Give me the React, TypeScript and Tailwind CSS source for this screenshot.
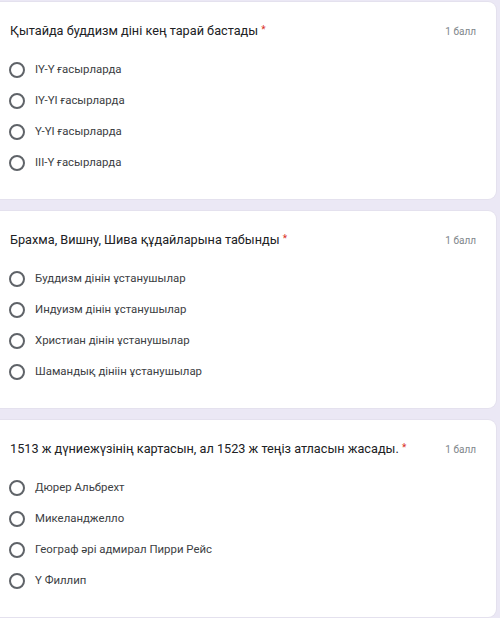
import React from "react";

type Question = {
	title: string;
	options: string[];
};

const questions: Question[] = [
	{
		title: "Қытайда буддизм діні кең тарай бастады",
		options: ["IY-Y ғасырларда", "IY-YI ғасырларда", "Y-YI ғасырларда", "III-Y ғасырларда"],
	},
	{
		title: "Брахма, Вишну, Шива құдайларына табынды",
		options: [
			"Буддизм дінін ұстанушылар",
			"Индуизм дінін ұстанушылар",
			"Христиан дінін ұстанушылар",
			"Шамандық дініін ұстанушылар",
		],
	},
	{
		title: "1513 ж дүниежүзінің картасын, ал 1523 ж теңіз атласын жасады.",
		options: ["Дюрер Альбрехт", "Микеланджелло", "Географ әрі адмирал Пирри Рейс", "Ү Филлип"],
	},
];

function QuestionCard({ q }: { q: Question }) {
	return (
		<div className="-ml-2 rounded-lg bg-white pl-[18px] pr-[20px] pt-[19px] pb-[21px] shadow-[0_0_0_1px_#e4e1ee]">
			{/* Header */}
			<div className="flex items-center justify-between h-5">
				<div className="text-[12.7px] text-[#202124]">
					{q.title} <span className="relative top-[1px] text-[10px] align-top text-[#d93025]">*</span>
				</div>
				<div className="text-[10px] text-[#80868b] shrink-0">1 балл</div>
			</div>

			{/* Options */}
			<div className="mt-[13px] flex flex-col">
				{q.options.map((opt) => (
					<label key={opt} className="flex items-center h-[31px]">
						<span className="ml-[-1px] h-4 w-4 rounded-full border-2 border-[#5f6368] shrink-0" />
						<span className="ml-[10px] text-[11.4px] text-[#3c4043]">{opt}</span>
					</label>
				))}
			</div>
		</div>
	);
}

export default function App() {
	return (
		<div
			className="min-h-screen w-[500px] overflow-hidden bg-[#ebe8f5] pt-[2px] pr-[4px]"
			style={{ fontFamily: "Roboto, 'Noto Sans', sans-serif" }}
		>
			<div className="flex flex-col gap-[12px]">
				{questions.map((q) => (
					<QuestionCard key={q.title} q={q} />
				))}
			</div>
		</div>
	);
}
